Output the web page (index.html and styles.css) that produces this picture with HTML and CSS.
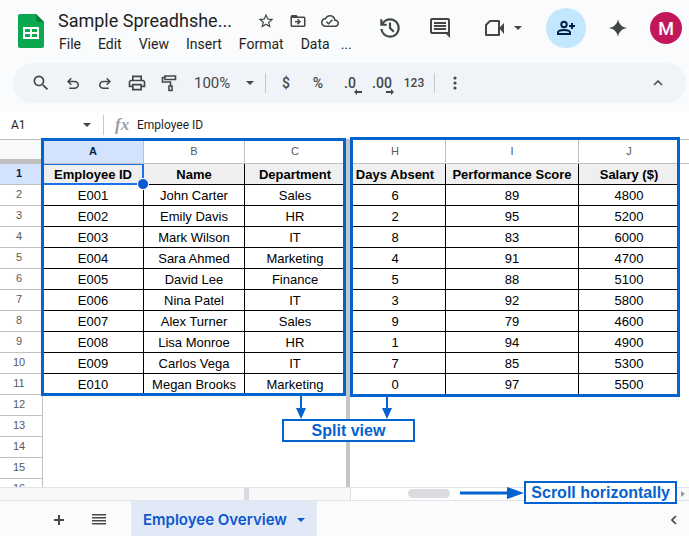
FILE: index.html
```html
<!DOCTYPE html>
<html lang="en">
<head>
  <meta charset="UTF-8">
  <meta name="viewport" content="width=device-width, initial-scale=1.0">
  <title>Sample Spreadsheet</title>
  <link rel="stylesheet" href="styles.css">
</head>
<body>
  <header class="header">
    <div class="top-bar">
      <svg class="logo" width="26" height="34" viewBox="0 0 26 34">
        <path d="M2 0h16l8 8v24a2 2 0 0 1-2 2H2a2 2 0 0 1-2-2V2a2 2 0 0 1 2-2z" fill="#0aa84f"/>
        <path d="M18 0l8 8h-6a2 2 0 0 1-2-2z" fill="#087f3c"/>
        <path d="M5 13h16v12H5zM7 15v3h5v-3zM14 15v3h5v-3zM7 20v3h5v-3zM14 20v3h5v-3z" fill="#fff" fill-rule="evenodd"/>
      </svg>
      <div class="doc">
        <div class="doc-title">
          <h1>Sample Spreadhshe...</h1>
          <button class="icon-btn" aria-label="Star">
            <svg width="18" height="18" viewBox="0 0 24 24"><path d="M22 9.24l-7.19-.62L12 2 9.19 8.63 2 9.24l5.46 4.73L5.82 21 12 17.27 18.18 21l-1.63-7.03L22 9.24zM12 15.4l-3.76 2.27 1-4.28-3.32-2.88 4.38-.38L12 6.1l1.71 4.04 4.38.38-3.32 2.88 1 4.28L12 15.4z"/></svg>
          </button>
          <button class="icon-btn" aria-label="Move">
            <svg width="18" height="18" viewBox="0 0 24 24"><path d="M20 6h-8l-2-2H4a2 2 0 0 0-2 2v12a2 2 0 0 0 2 2h16a2 2 0 0 0 2-2V8a2 2 0 0 0-2-2zm0 12H4V8h16v10zm-8-1l4-4-4-4-1.4 1.4 1.6 1.6H8v2h4.2l-1.6 1.6z"/></svg>
          </button>
          <button class="icon-btn" aria-label="Document status">
            <svg width="18" height="18" viewBox="0 0 24 24"><path d="M19.35 10.04A7.49 7.49 0 0 0 12 4C9.11 4 6.6 5.64 5.35 8.04A5.994 5.994 0 0 0 0 14c0 3.31 2.69 6 6 6h13c2.76 0 5-2.24 5-5 0-2.64-2.05-4.78-4.65-4.96zM19 18H6c-2.21 0-4-1.79-4-4 0-2.05 1.53-3.76 3.56-3.97l1.07-.11.5-.95A5.469 5.469 0 0 1 12 6c2.62 0 4.88 1.86 5.39 4.43l.3 1.5 1.53.11A2.98 2.98 0 0 1 22 15c0 1.65-1.35 3-3 3zm-9-3.8l-2.1-2.1-1.4 1.4L10 17l6-6-1.4-1.4z"/></svg>
          </button>
        </div>
        <nav class="menus">
          <button>File</button>
          <button>Edit</button>
          <button>View</button>
          <button>Insert</button>
          <button>Format</button>
          <button>Data</button>
          <button class="more">...</button>
        </nav>
      </div>
      <div class="actions">
        <button class="action" aria-label="Version history">
          <svg width="26" height="26" viewBox="0 0 24 24"><path d="M12 21q-3.45 0-6.012-2.287T3.05 13H5.1q.35 2.6 2.313 4.3T12 19q2.925 0 4.963-2.037T19 12t-2.037-4.962T12 5q-1.725 0-3.225.8T6.25 8H9v2H3V4h2v2.35q1.275-1.6 3.113-2.475T12 3q1.875 0 3.513.713t2.85 1.924 1.925 2.85T21 12t-.712 3.513-1.925 2.85-2.85 1.925T12 21m2.8-4.8L11 12.4V7h2v4.6l3.2 3.2z"/></svg>
        </button>
        <button class="action" aria-label="Comments">
          <svg width="24" height="24" viewBox="0 0 24 24"><path d="M21.99 4A2 2 0 0 0 20 2H4a2 2 0 0 0-2 2v12a2 2 0 0 0 2 2h14l4 4-.01-18zM20 4v12H4V4h16zM6 12h12v2H6v-2zm0-3h12v2H6V9zm0-3h12v2H6V6z"/></svg>
        </button>
        <button class="action meet" aria-label="Join a call">
          <svg width="22" height="18" viewBox="0 0 22 18"><path d="M6 2h9v14H2V6z" fill="none" stroke="#444746" stroke-width="2" stroke-linejoin="round"/><path d="M15 9l5-5v11z"/></svg>
          <svg width="8" height="4" viewBox="0 0 8 4"><path d="M0 0h8L4 4z"/></svg>
        </button>
        <button class="action share" aria-label="Share">
          <svg width="20" height="20" viewBox="0 0 20 20"><g fill="none" stroke="#041e49" stroke-width="2"><circle cx="8" cy="6.500" r="2.700"/><path d="M2 16v-1.500c0-1.500 3-2.500 6-2.500s6 1 6 2.500V16z"/><path d="M16 5v6M13 8h6"/></g></svg>
        </button>
        <button class="action gemini" aria-label="Ask assistant">
          <svg width="20" height="20" viewBox="0 0 20 20"><path d="M10 1c.7 5 4 8.300 9 9-5 .7-8.300 4-9 9-.7-5-4-8.300-9-9 5-.7 8.300-4 9-9z"/></svg>
        </button>
        <button class="avatar" aria-label="Account">M</button>
      </div>
    </div>

    <div class="toolbar">
      <button class="tool" aria-label="Search">
        <svg width="20" height="20" viewBox="0 0 24 24"><path d="M15.500 14h-.79l-.28-.27A6.471 6.471 0 0 0 16 9.500 6.500 6.500 0 1 0 9.500 16c1.610 0 3.090-.59 4.230-1.570l.27.28v.79l5 4.990L20.490 19l-4.990-5zm-6 0C7.010 14 5 11.990 5 9.500S7.010 5 9.500 5 14 7.010 14 9.500 11.990 14 9.500 14z"/></svg>
      </button>
      <button class="tool" aria-label="Undo">
        <svg width="18" height="18" viewBox="0 0 24 24"><path d="M7 20v-2h7.100q1.575 0 2.738-1T18 14.500 16.838 12 14.100 11H7.800l2.600 2.600L9 15l-5-5 5-5 1.400 1.400L7.800 9h6.300q2.425 0 4.163 1.575T20 14.500t-1.737 3.925T14.100 20z"/></svg>
      </button>
      <button class="tool" aria-label="Redo">
        <svg width="18" height="18" viewBox="0 0 24 24"><path d="M9.900 20q-2.425 0-4.163-1.575T4 14.500t1.737-3.925T9.900 9h6.300l-2.600-2.600L15 5l5 5-5 5-1.400-1.400 2.600-2.600H9.900q-1.575 0-2.737 1T6 14.500 7.163 17 9.900 18H17v2z"/></svg>
      </button>
      <button class="tool" aria-label="Print">
        <svg width="20" height="20" viewBox="0 0 24 24"><path d="M19 8h-1V3H6v5H5c-1.660 0-3 1.340-3 3v6h4v4h12v-4h4v-6c0-1.660-1.340-3-3-3zM8 5h8v3H8V5zm8 14H8v-4h8v4zm2-4v-2H6v2H4v-4c0-.55.45-1 1-1h14c.55 0 1 .45 1 1v4h-2z"/></svg>
      </button>
      <button class="tool" aria-label="Paint format">
        <svg width="16" height="18" viewBox="0 0 16 18"><g fill="none" stroke="#444746" stroke-width="1.600"><path d="M4 2h10.500v3.500H4zM4 3.500H1.500v4.500H9.500v4"/><path d="M8 12h3v4.500H8z"/></g></svg>
      </button>
      <label class="zoom">
        <select aria-label="Zoom"><option>100%</option></select>
        <svg width="8" height="4" viewBox="0 0 8 4"><path d="M0 0h8L4 4z"/></svg>
      </label>
      <span class="divider"></span>
      <button class="tool">$</button>
      <button class="tool">%</button>
      <button class="tool decimal" aria-label="Decrease decimal places">.0
        <svg class="less" width="8" height="6" viewBox="0 0 8 6"><path d="M0 3l3-3v2h5v2H3v2z"/></svg>
      </button>
      <button class="tool decimal" aria-label="Increase decimal places">.00
        <svg class="extra" width="8" height="6" viewBox="0 0 8 6"><path d="M8 3L5 0v2H0v2h5v2z"/></svg>
      </button>
      <button class="tool number">123</button>
      <span class="divider"></span>
      <button class="tool" aria-label="More">
        <svg width="4" height="14" viewBox="0 0 4 14"><circle cx="2" cy="2" r="1.600"/><circle cx="2" cy="7" r="1.600"/><circle cx="2" cy="12" r="1.600"/></svg>
      </button>
      <button class="tool collapse" aria-label="Hide the menus">
        <svg width="10" height="6" viewBox="0 0 10 6"><path d="M1 5l4-4 4 4" fill="none" stroke="#444746" stroke-width="1.500"/></svg>
      </button>
    </div>
  </header>

  <div class="formula-bar">
    <input class="name-box" type="text" value="A1" aria-label="Name box">
    <button class="name-arrow" aria-label="Named ranges">
      <svg width="8" height="4" viewBox="0 0 8 4"><path d="M0 0h8L4 4z"/></svg>
    </button>
    <span class="divider"></span>
    <span class="fx">fx</span>
    <input class="formula" type="text" value="Employee ID" aria-label="Formula">
  </div>

  <main class="sheet">
    <div class="grid">
      <table>
        <colgroup>
          <col class="col-num">
          <col class="col-cell"><col class="col-cell"><col class="col-cell">
          <col class="col-split">
          <col class="col-absent"><col class="col-score"><col class="col-cell">
          <col>
        </colgroup>
        <thead>
          <tr>
            <th class="corner"></th>
            <th class="selected">A</th><th>B</th><th>C</th>
            <td class="split"></td>
            <th class="cut">H</th><th>I</th><th>J</th>
            <th class="rest"></th>
          </tr>
        </thead>
        <tbody>
          <tr class="titles"><th class="selected">1</th><td class="active">Employee ID</td><td>Name</td><td>Department</td><td class="split"></td><td class="cut">Days Absent</td><td>Performance Score</td><td>Salary ($)</td></tr>
          <tr><th>2</th><td>E001</td><td>John Carter</td><td>Sales</td><td class="split"></td><td class="cut">6</td><td>89</td><td>4800</td></tr>
          <tr><th>3</th><td>E002</td><td>Emily Davis</td><td>HR</td><td class="split"></td><td class="cut">2</td><td>95</td><td>5200</td></tr>
          <tr><th>4</th><td>E003</td><td>Mark Wilson</td><td>IT</td><td class="split"></td><td class="cut">8</td><td>83</td><td>6000</td></tr>
          <tr><th>5</th><td>E004</td><td>Sara Ahmed</td><td>Marketing</td><td class="split"></td><td class="cut">4</td><td>91</td><td>4700</td></tr>
          <tr><th>6</th><td>E005</td><td>David Lee</td><td>Finance</td><td class="split"></td><td class="cut">5</td><td>88</td><td>5100</td></tr>
          <tr><th>7</th><td>E006</td><td>Nina Patel</td><td>IT</td><td class="split"></td><td class="cut">3</td><td>92</td><td>5800</td></tr>
          <tr><th>8</th><td>E007</td><td>Alex Turner</td><td>Sales</td><td class="split"></td><td class="cut">9</td><td>79</td><td>4600</td></tr>
          <tr><th>9</th><td>E008</td><td>Lisa Monroe</td><td>HR</td><td class="split"></td><td class="cut">1</td><td>94</td><td>4900</td></tr>
          <tr><th>10</th><td>E009</td><td>Carlos Vega</td><td>IT</td><td class="split"></td><td class="cut">7</td><td>85</td><td>5300</td></tr>
          <tr><th>11</th><td>E010</td><td>Megan Brooks</td><td>Marketing</td><td class="split"></td><td class="cut">0</td><td>97</td><td>5500</td></tr>
        </tbody>
        <tbody class="blank">
          <tr><th>12</th><td colspan="3"></td><td class="split"></td><td colspan="4"></td></tr>
          <tr><th>13</th><td colspan="3"></td><td class="split"></td><td colspan="4"></td></tr>
          <tr><th>14</th><td colspan="3"></td><td class="split"></td><td colspan="4"></td></tr>
          <tr><th>15</th><td colspan="3"></td><td class="split"></td><td colspan="4"></td></tr>
          <tr><th>16</th><td colspan="3"></td><td class="split"></td><td colspan="4"></td></tr>
        </tbody>
      </table>
    </div>

    <div class="scroll-row">
      <div class="frozen"><span class="handle"></span></div>
      <div class="track"><span class="thumb"></span></div>
      <button class="scroll-right" aria-label="Scroll right">
        <svg width="4" height="6" viewBox="0 0 4 6"><path d="M0 0l4 3-4 3z"/></svg>
      </button>
    </div>

    <!-- callouts -->
    <div class="frame frame-left"></div>
    <div class="frame frame-right"></div>
    <svg class="arrow arrow-left" width="10" height="23" viewBox="0 0 10 23"><path d="M4 0h2v12h4L5 23 0 12h4z"/></svg>
    <svg class="arrow arrow-right" width="10" height="23" viewBox="0 0 10 23"><path d="M4 0h2v12h4L5 23 0 12h4z"/></svg>
    <div class="callout split-label">Split view</div>
    <div class="scroll-note">
      <svg class="arrow-line" width="64" height="12" viewBox="0 0 64 12"><path d="M0 4.500h47V0l17 6-17 6V7.500H0z"/></svg>
      <div class="callout">Scroll horizontally</div>
    </div>
  </main>

  <footer class="tabs">
    <button class="tab-btn" aria-label="Add sheet">
      <svg width="12" height="12" viewBox="0 0 12 12"><path d="M5 1h2v4h4v2H7v4H5V7H1V5h4z"/></svg>
    </button>
    <button class="tab-btn" aria-label="All sheets">
      <svg width="14" height="11" viewBox="0 0 14 11"><path d="M0 0h14v1.400H0zM0 3h14v1.400H0zM0 6h14v1.400H0zM0 9h14v1.400H0z"/></svg>
    </button>
    <button class="tab">Employee Overview
      <svg width="8" height="4" viewBox="0 0 8 4"><path d="M0 0h8L4 4z"/></svg>
    </button>
    <button class="tab-btn side" aria-label="Show side panel">
      <svg width="6" height="10" viewBox="0 0 6 10"><path d="M5 1L1 5l4 4" fill="none" stroke="#444746" stroke-width="1.700"/></svg>
    </button>
  </footer>
</body>
</html>
```

FILE: styles.css
```css
* {
  box-sizing: border-box;
}
body {
  margin: 0;
  height: 100vh;
  display: flex;
  flex-direction: column;
  overflow: hidden;
  font-family: Roboto, Arial, sans-serif;
  font-size: 14px;
  color: #1f1f1f;
  background: #fff;
}
button, input, select {
  font: inherit;
  color: inherit;
  border: none;
  background: none;
  padding: 0;
  margin: 0;
}
button {
  display: flex;
  align-items: center;
  justify-content: center;
  cursor: pointer;
}
svg {
  display: block;
  flex: none;
  fill: #444746;
}

/* header */
.header {
  background: #f9fbfd;
  padding-bottom: 8px;
}
.top-bar {
  display: flex;
  height: 63px;
  padding: 8px 7px 0 18px;
}
.logo {
  margin-top: 6px;
}
.doc {
  margin-left: 14px;
}
.doc-title {
  display: flex;
  align-items: center;
  height: 26px;
}
.doc-title h1 {
  width: 192px;
  margin: 0;
  font-size: 18px;
  font-weight: 400;
  line-height: 26px;
  white-space: nowrap;
}
.icon-btn {
  width: 32px;
  height: 26px;
}
.menus {
  display: flex;
  gap: 17px;
  padding-left: 1px;
}
.menus button {
  height: 20px;
}
.menus .more {
  margin-left: -6px;
}
.actions {
  display: flex;
  align-items: center;
  gap: 10px;
  height: 40px;
  margin-left: auto;
}
.action {
  width: 40px;
  height: 40px;
}
.meet {
  width: 66px;
  gap: 8px;
}
.share {
  border-radius: 50%;
  background: #c2e7ff;
}
.gemini {
  width: 44px;
}
.avatar {
  width: 32px;
  height: 32px;
  border-radius: 50%;
  background: #c2185b;
  color: #fff;
  font-size: 18px;
  font-weight: 500;
}

/* toolbar */
.toolbar {
  display: flex;
  align-items: center;
  height: 40px;
  margin: 0 3px 0 13px;
  padding: 0 12px;
  border-radius: 20px;
  background: #f0f4f9;
  color: #444746;
}
.tool {
  position: relative;
  width: 32px;
  height: 32px;
  font-weight: 500;
}
.zoom {
  display: flex;
  align-items: center;
  width: 76px;
  padding-left: 9px;
  gap: 12px;
}
.zoom select {
  width: 40px;
  appearance: none;
  font-size: 15px;
}
.divider {
  width: 1px;
  height: 20px;
  background: #c7c7c7;
}
.toolbar .divider {
  margin: 0 4px;
}
.decimal svg {
  position: absolute;
  right: 4px;
  bottom: 4px;
}
.number {
  font-size: 12px;
}
.collapse {
  margin-left: auto;
}

/* formula bar */
.formula-bar {
  display: flex;
  align-items: center;
  height: 29px;
  border-bottom: 1px solid #c0c0c0;
  font-size: 12px;
}
.name-box {
  width: 74px;
  padding-left: 11px;
}
.name-arrow {
  width: 26px;
  height: 20px;
  margin-right: 3px;
}
.fx {
  width: 33px;
  padding-left: 11px;
  font-family: "Liberation Serif", serif;
  font-size: 17px;
  font-style: italic;
  font-weight: 700;
  color: #9aa0a6;
}
.formula {
  flex: 1;
}

/* grid */
.sheet {
  position: relative;
  display: flex;
  flex: 1;
  flex-direction: column;
  min-height: 0;
}
.grid {
  flex: 1;
  min-height: 0;
  overflow: hidden;
}
table {
  width: 100%;
  table-layout: fixed;
  border-collapse: separate;
  border-spacing: 0;
  font-family: "Liberation Sans", Arial, sans-serif;
  font-size: 13px;
  color: #000;
}
.col-num {
  width: 43px;
}
.col-cell {
  width: 101px;
}
.col-split {
  width: 4px;
}
.col-absent {
  width: 96px;
}
.col-score {
  width: 133px;
}
th, td {
  height: 21px;
  padding: 0;
  border-right: 1px solid #000;
  border-bottom: 1px solid #000;
  line-height: 18px;
  text-align: center;
  white-space: nowrap;
}
td {
  padding-top: 2px;
}
th {
  border-color: #c0c0c0;
  font-size: 11px;
  font-weight: 400;
  color: #575a5a;
}
thead th {
  height: 24px;
  padding-bottom: 2px;
}
tbody th {
  padding: 0 4px 2px 0;
}
.titles td {
  background: #efefef;
  font-weight: 700;
}
.titles .active {
  position: relative;
  box-shadow: inset 0 0 0 1px #1a73e8;
  border-color: #1a73e8;
}
.active::after {
  content: "";
  position: absolute;
  right: -6px;
  bottom: -6px;
  z-index: 1;
  width: 10px;
  height: 10px;
  border: 1px solid #fff;
  border-radius: 50%;
  background: #0b57d0;
}
th.selected {
  background: #d3e3fd;
  color: #041e49;
  font-weight: 700;
}
.corner {
  background: #f8f9fa;
  box-shadow: inset 0 -4px #c0c0c0;
}
th.rest {
  border-right: none;
}
td.cut, th.cut {
  padding-right: 5px;
}
.blank td {
  border: none;
}
td.split, .titles td.split {
  border: none;
  background: #c6c6c6;
}

/* scrollbars */
.scroll-row {
  display: flex;
  height: 14px;
  border-top: 1px solid #e1e3e6;
  border-bottom: 1px solid #e1e3e6;
}
.frozen {
  width: 351px;
  padding-left: 244px;
  border-right: 1px solid #dadce0;
  background: #f8f8f8;
}
.handle {
  display: block;
  width: 5px;
  height: 12px;
  background: #d8dbe0;
}
.track {
  flex: 1;
  padding: 1px 0 0 57px;
}
.thumb {
  display: block;
  width: 42px;
  height: 9px;
  border-radius: 5px;
  background: #dadce0;
}
.scroll-right {
  width: 12px;
  background: #f8f8f8;
}
.scroll-right svg {
  fill: #9a9a9a;
}

/* callouts */
.frame {
  position: absolute;
  border: 3px solid #0563cf;
}
.frame-left {
  left: 41px;
  top: -2px;
  width: 305px;
  height: 258px;
}
.frame-right {
  left: 350px;
  top: -3px;
  width: 330px;
  height: 260px;
}
.arrow {
  position: absolute;
  top: 256px;
  fill: #0563cf;
}
.arrow-left {
  left: 296px;
}
.arrow-right {
  left: 382px;
}
.callout {
  height: 23px;
  padding: 0 5px;
  border: 2px solid #0563cf;
  background: #fff;
  font-family: "Liberation Sans", Arial, sans-serif;
  font-size: 16px;
  font-weight: 700;
  line-height: 19px;
  text-align: center;
  white-space: nowrap;
  color: #0563cf;
}
.split-label {
  position: absolute;
  left: 282px;
  top: 279px;
  width: 133px;
}
.scroll-note {
  position: absolute;
  right: 12px;
  bottom: -3px;
  display: flex;
  align-items: center;
}
.arrow-line {
  fill: #0563cf;
}

/* sheet tabs */
.tabs {
  display: flex;
  align-items: center;
  height: 35px;
  padding: 0 0 0 39px;
  background: #f9fbfd;
}
.tab-btn {
  width: 40px;
  height: 35px;
  padding-top: 2px;
}
.tab {
  height: 35px;
  gap: 10px;
  margin-left: 12px;
  padding: 2px 12px 0;
  background: #e1e9f7;
  font-family: Inter, Roboto, sans-serif;
  font-size: 15px;
  font-weight: 600;
  color: #0b57d0;
}
.tab svg {
  fill: #0b57d0;
}
.side {
  width: 30px;
  margin-left: auto;
}
```
